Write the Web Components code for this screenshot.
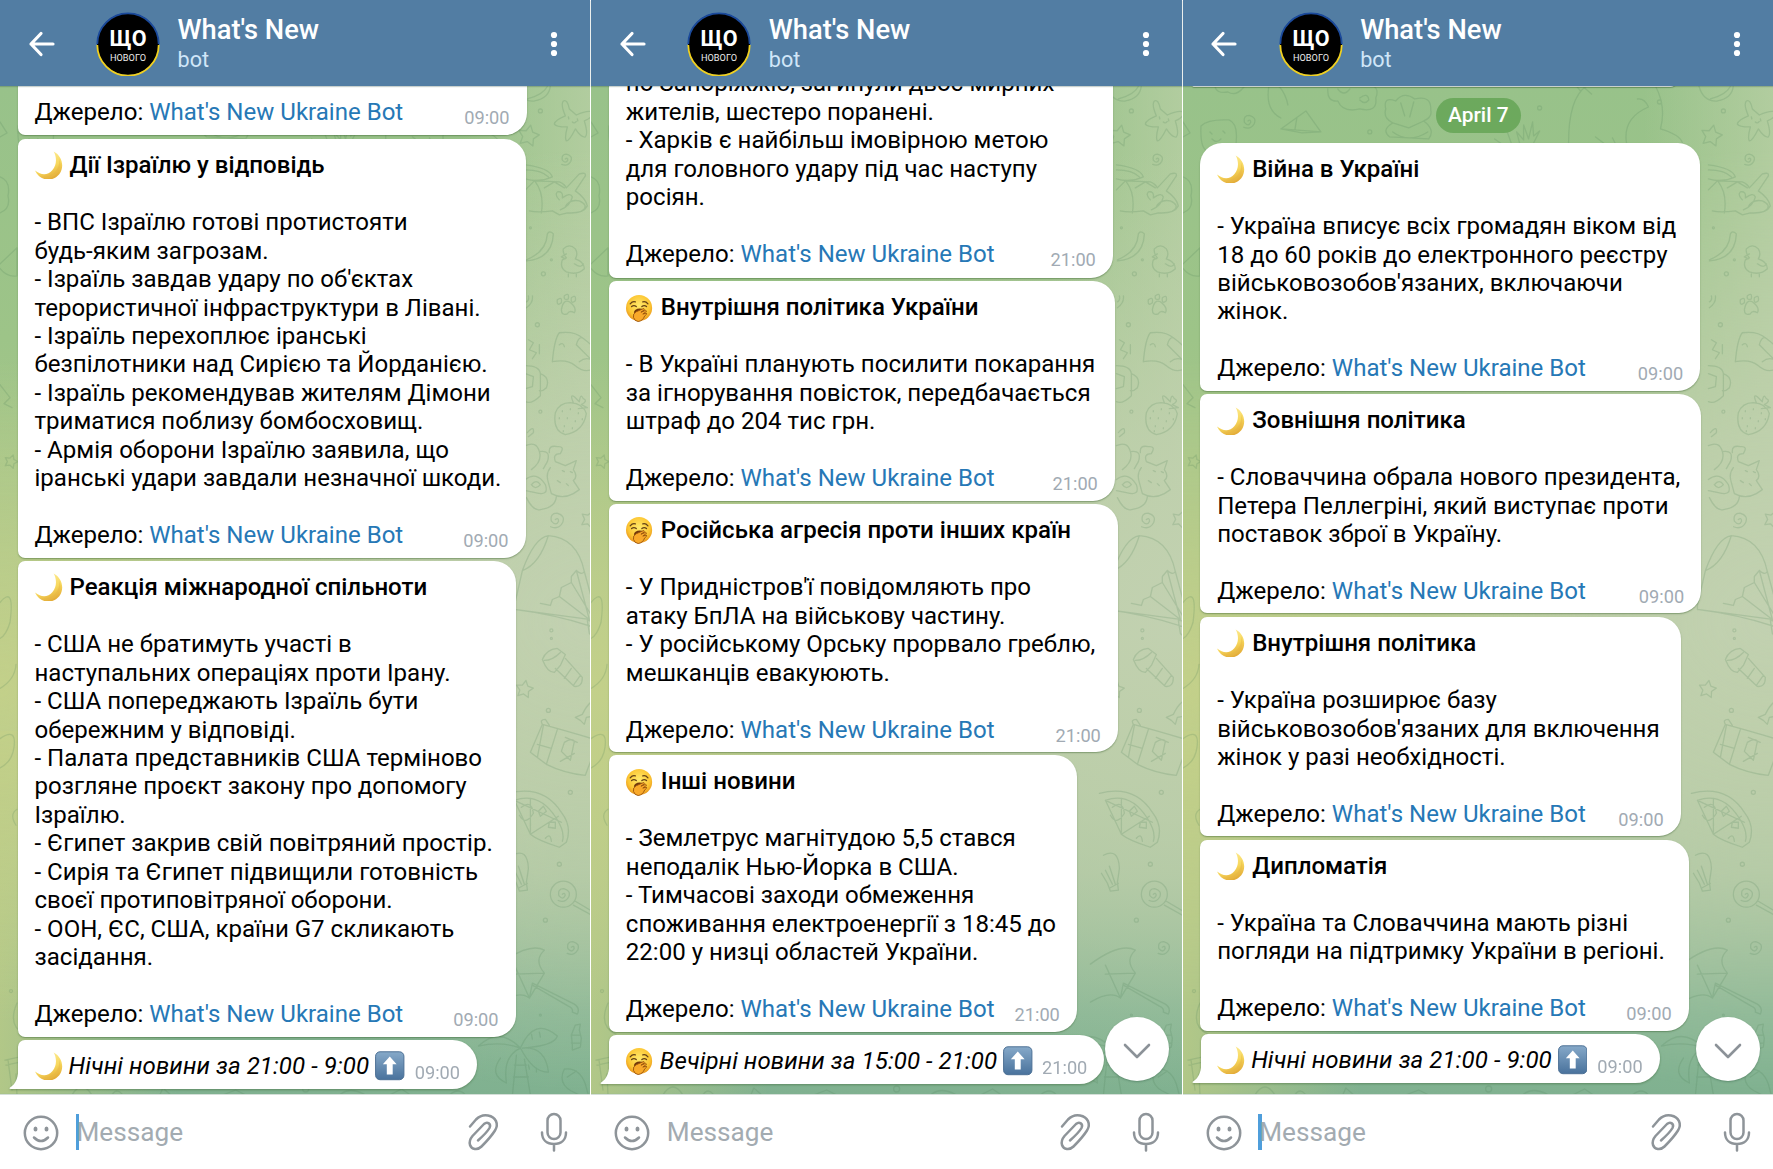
<!DOCTYPE html>
<html lang="uk">
<head>
<meta charset="utf-8">
<title>What's New</title>
<style>
html,body{margin:0;height:100%;overflow:hidden;background:#fff}
body{font-family:Roboto,"Liberation Sans",sans-serif}
</style>
</head>
<body>
<chat-board>
  <chat-screen focused style="--end:5px">
    <chat-message width="509" time="09:00" source cut></chat-message>
    <chat-message width="508" time="09:00" source emoji="moon" heading="Дії Ізраїлю у відповідь">- ВПС Ізраїлю готові протистояти
будь-яким загрозам.
- Ізраїль завдав удару по об'єктах
терористичної інфраструктури в Лівані.
- Ізраїль перехоплює іранські
безпілотники над Сирією та Йорданією.
- Ізраїль рекомендував жителям Дімони
триматися поблизу бомбосховищ.
- Армія оборони Ізраїлю заявила, що
іранські удари завдали незначної шкоди.</chat-message>
    <chat-message width="498" time="09:00" source emoji="moon" heading="Реакція міжнародної спільноти">- США не братимуть участі в
наступальних операціях проти Ірану.
- США попереджають Ізраїль бути
обережним у відповіді.
- Палата представників США терміново
розгляне проєкт закону про допомогу
Ізраїлю.
- Єгипет закрив свій повітряний простір.
- Сирія та Єгипет підвищили готовність
своєї протиповітряної оборони.
- ООН, ЄС, США, країни G7 скликають
засідання.</chat-message>
    <chat-message width="460" time="09:00" emoji="moon" digest="Нічні новини за 21:00 - 9:00"></chat-message>
  </chat-screen>
  <chat-screen scroll style="--end:10px">
    <chat-message width="504" time="21:00" source cut>по Запоріжжю, загинули двоє мирних
жителів, шестеро поранені.
- Харків є найбільш імовірною метою
для головного удару під час наступу
росіян.</chat-message>
    <chat-message width="506" time="21:00" source emoji="yawn" heading="Внутрішня політика України">- В Україні планують посилити покарання
за ігнорування повісток, передбачається
штраф до 204 тис грн.</chat-message>
    <chat-message width="509" time="21:00" source emoji="yawn" heading="Російська агресія проти інших країн">- У Придністров'ї повідомляють про
атаку БпЛА на військову частину.
- У російському Орську прорвало греблю,
мешканців евакуюють.</chat-message>
    <chat-message width="468" time="21:00" source emoji="yawn" heading="Інші новини">- Землетрус магнітудою 5,5 стався
неподалік Нью-Йорка в США.
- Тимчасові заходи обмеження
споживання електроенергії з 18:45 до
22:00 у низці областей України.</chat-message>
    <chat-message width="496" time="21:00" emoji="yawn" digest="Вечірні новини за 15:00 - 21:00"></chat-message>
  </chat-screen>
  <chat-screen focused scroll style="--end:11px">
    <chat-sliver></chat-sliver>
    <chat-date>April 7</chat-date>
    <chat-message first width="500" time="09:00" source emoji="moon" heading="Війна в Україні">- Україна вписує всіх громадян віком від
18 до 60 років до електронного реєстру
військовозобов'язаних, включаючи
жінок.</chat-message>
    <chat-message width="501" time="09:00" source emoji="moon" heading="Зовнішня політика">- Словаччина обрала нового президента,
Петера Пеллегріні, який виступає проти
поставок зброї в Україну.</chat-message>
    <chat-message width="480.5" time="09:00" source emoji="moon" heading="Внутрішня політика">- Україна розширює базу
військовозобов'язаних для включення
жінок у разі необхідності.</chat-message>
    <chat-message width="488.5" time="09:00" source emoji="moon" heading="Дипломатія">- Україна та Словаччина мають різні
погляди на підтримку України в регіоні.</chat-message>
    <chat-message width="460" time="09:00" emoji="moon" digest="Нічні новини за 21:00 - 9:00"></chat-message>
  </chat-screen>
</chat-board>
<script>
const make = (el, html) => { el.attachShadow({mode:'open'}).innerHTML = html; };
const define = (name, render) => customElements.define(name, class extends HTMLElement {
  connectedCallback(){ if(!this.shadowRoot) make(this, render(this)); }
});

define('chat-emoji', el => {
  const art = {
    moon: `<defs><linearGradient id="g" x1=".2" y1="0" x2=".6" y2="1"><stop offset="0" stop-color="#fff0a0"/><stop offset=".6" stop-color="#f7d75c"/><stop offset="1" stop-color="#e2a935"/></linearGradient></defs>
      <path d="M20 .5C29 5 32 17 26 25C19 33.500 5 32.500 0 21C7 26.500 14 26 18.500 20.500C23.500 15 23.500 7 20 .5Z" fill="url(#g)"/><path d="M26 8C28.500 15 27 22 21.500 26.500C16 30.500 8.500 29.500 4.500 26.500C12 29 19 26.500 22.500 21.500C26 17 26.300 12 26 8Z" fill="#e7b745" opacity=".5"/>`,
    yawn: `<defs><radialGradient id="g" cx=".5" cy=".4" r=".6"><stop offset="0" stop-color="#ffe96b"/><stop offset=".7" stop-color="#fcc633"/><stop offset="1" stop-color="#e8951d"/></radialGradient></defs>
      <circle cx="14" cy="15" r="14" fill="url(#g)"/><path d="M4.500 10.500Q7 7.500 10 8.500M18 8.500Q21 7.500 23.500 10.500M6 13.500Q8.500 11.500 11 13.500M17 13.500Q19.500 11.500 22 13.500" stroke="#654216" stroke-width="1.400" fill="none" stroke-linecap="round"/>
      <ellipse cx="14.500" cy="20" rx="6" ry="4.500" fill="#71370b"/><path d="M8 25Q7 21 11 19L19 15.500Q20.500 16 19 17.500L16 19.500L21 17.500Q23 18 21 19.500L18 21.500L22 20.500Q23 21.500 20 23.500Q18 29 13 29.500Q9 29 8 25Z" fill="#f9a92a" stroke="#9c560e" stroke-width="1"/>`,
    up: `<defs><linearGradient id="g" x1="0" y1="0" x2="0" y2="1"><stop offset="0" stop-color="#86a9c9"/><stop offset="1" stop-color="#49729c"/></linearGradient></defs>
      <rect x=".6" y=".8" width="28.800" height="28.400" rx="4.500" fill="url(#g)" stroke="#4b6f94" stroke-width="1"/><path d="M15 5.500L22 13.500H18V24H12V13.500H8Z" fill="#fff"/>`
  };
  return `<style>:host{display:block;width:28px;height:28px;flex:none}:host([kind=up]){width:29.500px;height:29.500px}svg{display:block;width:100%;height:100%}</style><svg viewBox="0 0 30 30">${art[el.getAttribute('kind')]}</svg>`;
});

define('chat-message', el => {
  const a = n => el.getAttribute(n), has = n => el.hasAttribute(n);
  const title = a('heading') ? `<div class="line"><chat-emoji kind="${a('emoji')}"></chat-emoji><b>${a('heading')}</b></div><div class="gap"></div>` : '';
  const foot = has('source')
    ? `<div class="gap"></div><div class="foot"><span>Джерело: <a>What's New Ukraine Bot</a></span><time>${a('time')}</time></div>`
    : `<div class="foot digest"><div class="line"><chat-emoji kind="${a('emoji')}"></chat-emoji><i>${a('digest')}</i><chat-emoji kind="up"></chat-emoji></div><time>${a('time')}</time></div>`;
  return `<style>
    :host{display:block;flex:none;box-sizing:border-box;width:${a('width')}px;margin-left:17.5px;padding:12.200px 17px 7.800px;background:#fff;border-radius:7px 22px 22px 7px;box-shadow:0 1px 1.5px rgba(40,80,30,.42);font-size:24.060px;line-height:28.470px;color:#000}
    :host([first]){border-top-left-radius:22px}
    :host([cut]){padding-bottom:9.300px}
    :host([digest]){width:${+a('width')+8}px;margin-left:9px;padding:0;background:none;box-shadow:none;filter:drop-shadow(0 1px 1px rgba(40,80,30,.4));display:flex}
    .body{white-space:pre}
    .gap{height:28.470px}
    .line{display:flex;align-items:center;height:28.470px;white-space:pre}
    .line b{font-weight:500;margin-left:7px}.line i{margin:0 6px;letter-spacing:.08px}
    .foot{display:flex;justify-content:space-between;height:28.470px;white-space:pre}
    a{color:#2678b6}
    time{font-size:18.200px;color:#a1aab3;padding-top:6px}
    .tail{display:block;width:9px;height:49px;flex:none}
    .digest{flex:1;height:49px;box-sizing:border-box;background:#fff;border-radius:7px 25px 25px 0;padding:12px 17px 8px 16.500px}
    .digest time{padding-top:6.500px}
  </style>${has('digest') ? '<svg class="tail" viewBox="0 0 9 49"><path d="M9.500 28C9 40 6 44 .5 48Q0 49 2 49H9.500Z" fill="#fff"/></svg>' : ''}${title}${has('source') ? '<div class="body"><slot></slot></div>' : ''}${foot}`;
});

define('chat-date', () => `<style>:host{display:block;flex:none;align-self:center;width:85px;height:35px;margin:0 0 6.500px 1px;border-radius:18px;background:rgba(91,160,76,.72);color:#fff;font-size:20.900px;font-weight:500;line-height:34px;text-align:center}</style><slot></slot>`);
define('chat-sliver', () => `<style>:host{display:block;flex:none;width:486px;height:8px;margin:0 0 7px 9px;border-radius:0 0 8px 2px;background:#fff;box-shadow:0 1px 1px rgba(40,80,30,.4)}</style>`);

define('chat-header', () => `<style>
  :host{display:flex;flex:none;align-items:center;height:86px;background:#527da3;color:#fff;position:relative;z-index:2;box-shadow:0 1px 1px rgba(40,70,60,.25)}
  .back{width:28px;height:28px;margin:1px 0 0 26.500px}
  .ava{width:64px;height:64px;margin:2px 0 0 41.500px}
  .names{flex:1;margin-left:17.500px;display:flex;flex-direction:column}
  b{font-weight:500;font-size:27.300px;line-height:32px;padding-top:1px}
  span{font-size:21.600px;line-height:28px;color:#d0e6f8}
  .more{width:8px;height:28px;margin:1px 32px 0 0}
  svg{display:block;flex:none}
</style>
<svg class="back" viewBox="0 0 28 28" fill="none" stroke="#fff" stroke-width="3.200" stroke-linecap="round" stroke-linejoin="round"><path d="M14 3.500L4 14L14 24.500M4 14H26"/></svg>
<svg class="ava" viewBox="0 0 64 64"><circle cx="32" cy="32" r="31" fill="#000"/><path d="M1.300 32A30.700 30.700 0 0 1 62.700 32" fill="none" stroke="#1b4a9c" stroke-width="1.800"/><path d="M1.300 33A30.700 30.700 0 0 0 62.700 33" fill="none" stroke="#f0d020" stroke-width="1.800"/>
<text x="32" y="34" text-anchor="middle" font-size="21.500" font-weight="700" fill="#fff" textLength="37" font-family="Roboto">ЩО</text><text x="32" y="48.600" text-anchor="middle" font-size="9.200" fill="#eee" textLength="36" lengthAdjust="spacingAndGlyphs" font-family="Roboto">НОВОГО</text></svg>
<div class="names"><b>What's New</b><span>bot</span></div>
<svg class="more" viewBox="0 0 8 28" fill="#fff"><circle cx="4" cy="5" r="3.100"/><circle cx="4" cy="14" r="3.100"/><circle cx="4" cy="23" r="3.100"/></svg>`);

define('chat-input', el => `<style>
  :host{display:flex;flex:none;height:74px;background:#fff;align-items:center;color:#a3abb1;font-size:26.200px}
  .smile{width:36px;height:36px;margin:2px 0 0 23px}
  .cursor{width:3.500px;height:36px;margin:0 -3.500px 0 16.500px;background:${el.hasAttribute('focused') ? '#4f9edb' : 'transparent'}}
  span{flex:1;margin-left:${el.hasAttribute('focused') ? 1 : 0}px;line-height:36px}
  .clip{width:34px;height:42px;margin-right:38px}
  .mic{width:30px;height:42px;margin-right:21px}
  svg{display:block;flex:none;fill:none;stroke:#8e9499;stroke-width:2.500;stroke-linecap:round;stroke-linejoin:round}
</style>
<svg class="smile" viewBox="0 0 36 36"><circle cx="18" cy="18" r="16.200"/><path d="M11 22.500Q18 29.500 25 22.500"/><ellipse cx="12.500" cy="14" rx="2" ry="2.600" fill="#8e9499" stroke="none"/><ellipse cx="23.500" cy="14" rx="2" ry="2.600" fill="#8e9499" stroke="none"/></svg>
<div class="cursor"></div><span>Message</span>
<svg class="clip" viewBox="0 0 34 42"><path d="M3 15.500L9 8.500C12.500 5 17 3.700 21 4.500C29 6 32 13 28 19.500C24.500 25 19 31 14.500 35.500C10.500 39.500 4.500 38.500 3 34C2 30.500 3 28 5.500 25L17 13C20.500 10 24.500 13 22.500 17C20.500 20.500 16 25 11 29.500"/></svg>
<svg class="mic" viewBox="0 0 30 42"><rect x="8.500" y="3" width="13" height="25" rx="6.500"/><path d="M3 21.500C3 29 8 33 15 33S27 29 27 21.500M15 33V39.500"/></svg>`);

const star = (x,y,r,rot=0) => { let p=''; for(let i=0;i<10;i++){const q=i%2?r*.52:r,t=(rot+i*36-90)*Math.PI/180;p+=(i?'L':'M')+(x+q*Math.cos(t)).toFixed(1)+' '+(y+q*Math.sin(t)).toFixed(1);} return p+'Z'; };
const spiral = (x,y,r) => `M${x} ${y}q${r*.4} ${-r*.3} ${r*.4} ${r*.2}q${-r*.3} ${r*.7} ${-r*.9} 0q${-r*.2} ${-r} ${r*.7} ${-r}q${r*1.1} ${r*.3} ${r*.7} ${r*1.200}q${-r*.5} ${r*.9} ${-r*1.500} ${r*.5}`;
const dot = (x,y,r=2) => `M${x-r} ${y}a${r} ${r} 0 1 0 ${r*2} 0a${r} ${r} 0 1 0 ${-r*2} 0`;
const doodles = [
  'M516 84Q520 102 535 101Q551 98 551 84M528 99Q546 94 549 84',
  dot(541,111), star(529,136,11,12), spiral(566,159,6),
  'M564 101Q568 99 570 109L577 115Q588 110 593 112Q594 117 585 121Q589 134 586 137Q582 138 576 129Q570 141 567 141Q565 138 568 127Q556 127 555 124Q556 120 566 116Q561 104 564 101ZM569 117l.5 2M578 119l.5 2M573 122q2 2 4-.5',
  'M526 165Q550 168 553 177Q540 183 526 179M526 170Q542 170 549 177M526 190L535 181L560 182Q565 184 567 188L580 174Q587 172 586 176L576 191Q586 198 588 206Q584 214 568 213L560 215L553 211Q538 213 530 211M536 182Q545 194 542 213M560 200Q555 195 558 192Q564 191 563 198Q571 192 573 197Q571 206 561 210M566 207Q570 199 580 201Q589 205 584 210M545 188L555 182L565 188',
  dot(531,228,1), dot(552,260,1), dot(544,274),
  'M527 260Q547 252 548 234Q550 230 554 234Q553 259 527 261',
  'M567 258Q563 253 564 249Q570 243 576 249Q579 254 576 259Q585 262 585 269Q578 276 567 272Q560 268 563 260ZM567 254L562 257L566 259M575 264Q582 269 584 264M569 274V277M577 274V277',
  'M562 310Q564 299 570 302Q578 308 575 313Q570 310 568 314Q562 316 562 310ZM558 300q5-4 4 3q-5 4-4-3M565 296q5-4 4 3q-5 2-4-3M572 298q5-4 4 3q-5 4-4-3',
  'M527 308Q534 303 533 296M527 302Q530 301 529 296', dot(538,325),
  'M553 362Q555 339 560 333Q575 331 583 338Q594 346 598 353L592 360L577 345Q579 337 583 338M553 362Q568 359 576 366T592 370M560 345q4-3 5 2M592 360Q586 357 580 362',
  'M529 340L534 343L530 350L537 353L533 359M540 345V354M526 366Q540 366 541 374V396Q532 405 526 402M541 374Q551 378 547 388Q543 392 540 391M526 374L534 377L533 387L526 389', dot(541,412,1.500),
  'M556 413Q560 403 571 403Q584 404 587 414Q584 432 566 435Q553 431 556 413ZM574 403Q570 394 575 397L580 402Q581 393 584 399Q589 401 582 405L588 408L579 409M563 411v1M571 409v1M579 413v1M560 418v1M568 418v1M576 421v1M583 419v1M565 426v1M573 428v1M564 431v1',
  'M526 446Q537 441 540 452Q543 462 532 470M540 452Q552 450 548 462L544 469M528 433Q535 425 534 433L529 437M550 453Q549 445 558 447Q566 446 561 454Q553 454 556 462L566 466L577 461L574 470Q579 477 574 481L580 490L574 494Q563 500 552 494L549 483Q546 474 551 468M526 480Q537 471 546 485Q550 497 536 493L526 491M532 485q5-6 9 0q-5 6-9 0M527 498Q534 512 541 510Q556 508 557 497M563 471l2 1M571 472l2 1M558 481l3 2M567 484l2 2',
  spiral(556,520,8), star(590,520,9,20), 'M515 606L523 571Q535 538 549 536Q578 538 585 572Q582 576 577 571L572 577L572 583L562 588L560 597L553 600L551 606L541 604M515 610Q555 615 592 627M515 610L590 620L560 597M590 620L577 571M594 619L572 583M523 571Q540 565 549 536M585 572L599 624M588 621L606 623L610 638Q600 643 590 634ZM515 606V610',
  dot(552,631,1.500), dot(552,639,1), 'M543 660Q547 650 558 649L566 655L561 666L555 673Q548 673 543 660ZM545 661Q553 661 561 653M566 659L583 678Q583 688 575 687L556 669M565 679L572 669M574 686L581 676', star(525,690,9,10), dot(549,711),
  'M576 718L583 715Q592 696 606 699Q612 711 599 716L587 718L585 725L581 721Z', dot(571,793),
  'M531 753L543 725Q565 731 592 739Q599 741 595 752L586 776Q565 774 547 765ZM531 753L547 765L558 730M543 725Q540 720 546 720L550 726M538 745L552 749M544 726L538 758M565 743Q573 738 575 742L571 761L562 752ZM561 762L575 754M566 738L578 743',
  'M509 794Q544 785 562 813Q573 827 567 843L560 848Q538 841 531 835L515 801Q540 792 557 819Q566 833 563 842M515 801L562 823M531 835L559 817M531 800V833M522 808q10-8 12 6q-8 13-14 2M539 812l5-5 3 5-6 5ZM550 823l6 0 0 6-7-1ZM546 839q5-6 6 3',
  dot(560,865), 'M513 856Q528 848 529 869Q528 877 527 883L528 891L520 892L517 884L511 874M519 867L525 885M522 885L515 871M519 889L528 884',
  'M551 895a13 13 0 1 0 26 0a13 13 0 1 0-26 0M576 902L596 914M574 906L594 917', spiral(563,895,7), dot(546,921), spiral(572,948,7),
  'M500 965Q530 943 545 951Q534 961 545 974L530 999Q520 991 500 1003M515 966L530 999L533 984L575 1005Q581 1009 578 1015L573 1013Q574 1009 569 1007L533 986M515 975L545 974',
  dot(541,1016,1), 'M576 1026l5-1-1 6 2 8-1 9-8 3 0-5-1-10zM573 1036h8M572 1044h9',
  'M521 1049Q500 1027 479 1047Q502 1042 521 1049Q535 1017 558 1037Q555 1047 523 1049Q546 1047 549 1073Q534 1074 521 1049Q503 1057 507 1084Q489 1076 501 1059M517 1056L513 1096M525 1060L531 1096M515 1066h12M514 1078h15M532 1035l1 5M540 1033l1 5M530 1070l-1-4M537 1073l0-4',
  'M565 1070Q580 1068 586 1085L589 1096M565 1070Q558 1084 572 1092L580 1096M568 1078L577 1072',
  // Left edge and the strip along the top
  'M18 126Q25 119 46 120Q57 124 52 151M18 126Q17 150 25 151M27 132l2 2M40 131l2 2M29 139q5 5 9 0', spiral(65,121,7),
  'M98 129L123 111L138 132ZM112 130L114 118M98 129L119 133L138 132',
  'M86 86Q82 110 98 118M96 86Q103 94 105 105', 'M32 86Q33 94 45 92Q53 97 61 87',
  'M145 89Q144 102 155 101Q160 113 177 109Q195 113 193 98Q198 86 184 84M155 89q6 8 12 0M177 98q8-6 9 2q-4 5-9 0',
  'M203 109Q200 96 213 101Q221 91 232 99Q249 95 248 110Q250 117 241 121Q253 130 246 139L207 137Q198 130 210 123Q200 118 203 109ZM210 123L226 128L241 121M218 103L222 116M231 102L227 117M210 132Q226 144 245 132',
  dot(187,132), dot(357,108), 'M338 147L334 132L341 140L341 125L346 139L350 122L351 136L357 131L351 143M325 133L330 147M312 139L322 146',
  'M386 143Q386 98 404 86M473 86Q484 107 478 129Q498 135 500 143M444 143Q440 118 466 107Q462 98 455 99M394 86L398 91M401 87L409 94M413 137L421 143M430 138L434 146',
  dot(477,102), 'M0 122L7 133L0 137', 'M0 177Q11 181 8 196Q11 209 0 213', 'M-2 266L17 248V276Q6 278-2 266',
  'M0 385L10 398L4 404L12 408', star(11,462,7,18), 'M0 603Q15 585 10 623Q6 636 0 639', 'M0 689Q15 680 16 665',
  'M-1 740Q17 727 14 748Q12 764-3 770', 'M17 810Q9 815 16 826', dot(11,992,1.500), 'M17 1004Q7 1027 25 1035', 'M5 1061L19 1058M6 1066L20 1063M8 1061L12 1091M16 1075L17 1096',
  'M72 1096Q82 1080 92 1096M112 1096Q117 1088 123 1096M160 1096L163 1089L171 1096M223 1096L236 1091L246 1096', dot(306,1090,3), 'M340 1096Q350 1087 366 1096M390 1096l12-6 9 6M450 1096q9-8 16 0'
];

define('chat-wallpaper', () => `<style>
 :host{display:block;position:absolute;inset:0;z-index:0;background:
  radial-gradient(ellipse 430px 330px at 0% 60%,rgba(197,209,137,.9),rgba(197,209,137,0) 100%),
  radial-gradient(ellipse 560px 470px at 100% 53%,rgba(194,209,177,.98) 0%,rgba(194,209,177,.72) 40%,rgba(194,209,177,0) 100%),
  linear-gradient(270deg,rgba(186,208,166,.75),rgba(186,208,166,0) 22%) 0 0/100% 55% no-repeat,
  linear-gradient(90deg,rgba(186,203,134,.85),rgba(186,203,134,0) 30%) 0 100%/100% 36% no-repeat,
  linear-gradient(180deg,#98c28a 0%,#9dc488 25%,#b0c88e 55%,#a6c39a 78%,#86b593 92%,#80b190 100%)}
 svg{display:block;width:100%;height:100%}
</style><svg viewBox="0 86 591 1009" preserveAspectRatio="none"><path fill="none" stroke="#52805a" stroke-opacity=".2" stroke-width="1.300" stroke-linejoin="round" stroke-linecap="round" d="${doodles.join('')}"/></svg>`);

define('chat-scroll', () => `<style>:host{display:block;position:absolute;right:13px;bottom:13px;width:64px;height:64px;border-radius:50%;background:#fff;box-shadow:0 1px 2px rgba(30,70,50,.35);z-index:3}svg{display:block}</style><svg width="64" height="64" viewBox="0 0 64 64" fill="none" stroke="#8c9298" stroke-width="2.600" stroke-linecap="round" stroke-linejoin="round"><path d="M20 28L32 40L44 28"/></svg>`);

define('chat-screen', el => `<style>
  :host{display:flex;flex-direction:column;flex:1;min-width:0;height:1169px;box-sizing:border-box}
  main{flex:1;min-height:0;position:relative;overflow:hidden;display:flex;border-bottom:1px solid #d4dfd8}
  .list{flex:1;position:relative;z-index:1;display:flex;flex-direction:column;justify-content:flex-end;gap:3.500px;padding-bottom:var(--end,6px)}
</style><chat-header></chat-header><main><chat-wallpaper></chat-wallpaper><div class="list"><slot></slot></div>${el.hasAttribute('scroll') ? '<chat-scroll></chat-scroll>' : ''}</main><chat-input ${el.hasAttribute('focused') ? 'focused' : ''}></chat-input>`);

define('chat-board', () => `<style>:host{display:flex;gap:1px;width:1773px;height:1169px;background:#fff}</style><slot></slot>`);
</script>
</body>
</html>
